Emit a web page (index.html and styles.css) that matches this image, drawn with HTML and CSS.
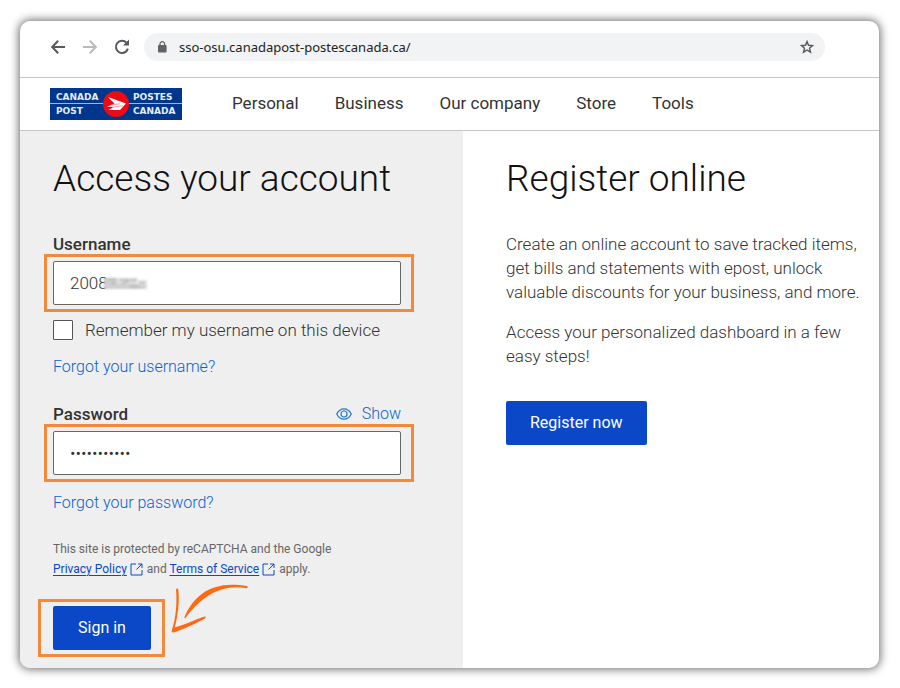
FILE: index.html
```html
<!DOCTYPE html>
<html lang="en">
<head>
<meta charset="utf-8">
<meta name="viewport" content="width=device-width, initial-scale=1">
<title>Access your account</title>
<link rel="stylesheet" href="styles.css">
</head>
<body>
<div class="window">
  <div class="toolbar">
    <div class="tools">
      <button class="tool" type="button" aria-label="Back">
        <svg width="14" height="14" viewBox="0 0 14 14" fill="none" stroke="#56595d" stroke-width="2"><path d="M14 7H1.8M7.2 .8 1.2 7l6 6.2"/></svg>
      </button>
      <button class="tool" type="button" aria-label="Forward">
        <svg width="14" height="14" viewBox="0 0 14 14" fill="none" stroke="#b9bbbd" stroke-width="2"><path d="M0 7h12.2M6.8 .8l6 6.2-6 6.2"/></svg>
      </button>
      <button class="tool" type="button" aria-label="Reload">
        <svg width="16" height="16" viewBox="0 0 16 16" fill="none" stroke="#56595d" stroke-width="2"><path d="M13.9 9.6A6.1 6.1 0 1 1 12.6 3.8"/><path d="M15 .6v6H9z" fill="#56595d" stroke="none"/></svg>
      </button>
    </div>
    <div class="address">
      <svg width="10" height="12" viewBox="0 0 10 12"><rect x="1" y="4" width="8.6" height="7.6" rx="1" fill="#5f6368"/><path d="M3 4.5V3a2.3 2.3 0 0 1 4.6 0v1.5" fill="none" stroke="#5f6368" stroke-width="1.3"/></svg>
      <input class="url" type="text" aria-label="Address" value="sso-osu.canadapost-postescanada.ca/">
      <button class="star" type="button" aria-label="Bookmark">
        <svg width="14" height="14" viewBox="0 0 14 14" fill="none" stroke="#56595d" stroke-width="1.4"><path d="M7 1.5l1.5 3.8 4.1.3-3.1 2.6 1 4L7 10l-3.5 2.2 1-4L1.4 5.6l4.1-.3z"/></svg>
      </button>
    </div>
  </div>

  <header class="site-header">
    <a class="logo" href="#" aria-label="Canada Post">
      <svg width="132" height="32" viewBox="0 0 132 32">
        <rect width="132" height="32" fill="#00368c"/>
        <path d="M0 15.5h132" stroke="#9db8dc"/>
        <g fill="#e4edf8" class="logo-text">
          <text x="6" y="12">CANADA</text><text x="6" y="26">POST</text>
          <text x="83" y="12">POSTES</text><text x="83" y="26">CANADA</text>
        </g>
        <circle cx="66" cy="16" r="13" fill="#ee0a12"/>
        <path d="M58 9 76 15.500 70 22H58.400L63 19.500 61.500 18.800H57L64.500 15.600z" fill="#fff"/>
        <path d="M60 19.600 73 17.800M62 16.800 70 15.800" stroke="#ee0a12" stroke-width=".8" opacity=".5"/>
      </svg>
    </a>
    <nav class="nav">
      <a href="#">Personal</a>
      <a href="#">Business</a>
      <a href="#">Our company</a>
      <a href="#">Store</a>
      <a href="#">Tools</a>
    </nav>
  </header>

  <main class="columns">
    <section class="access">
      <h1>Access your account</h1>
      <form>
        <label class="label" for="username">Username</label>
        <div class="highlight field">
          <input id="username" type="text" value="2008">
          <svg class="smudge" width="50" height="16" viewBox="0 0 50 16">
            <g fill="#cfcfcf"><rect x="3" y="3" width="12" height="11"/><rect x="14" y="3" width="22" height="6" opacity=".7"/><rect x="14" y="9" width="24" height="5"/><rect x="37" y="5" width="9" height="9" opacity=".65"/></g>
            <path d="M7 4h8M10 8h5M19 5h8M21 9l8-4M30 5h6M29 12h15M38 8h6" stroke="#a2a2a2" fill="none"/>
          </svg>
        </div>
        <div class="remember">
          <input id="remember" type="checkbox">
          <label for="remember">Remember my username on this device</label>
        </div>
        <a class="link forgot-user" href="#">Forgot your username?</a>
        <div class="password-head">
          <label class="label" for="password">Password</label>
          <button class="show" type="button">
            <svg width="16" height="12" viewBox="0 0 16 12" fill="none" stroke="#2874d0" stroke-width="1.2"><path d="M.7 6C2.600 2.400 5 .8 8 .8S13.400 2.400 15.300 6C13.400 9.600 11 11.200 8 11.200S2.600 9.600.7 6z"/><circle cx="8" cy="6" r="3"/></svg>
            Show
          </button>
        </div>
        <div class="highlight field">
          <input id="password" type="password" value="password123">
        </div>
        <a class="link forgot-pass" href="#">Forgot your password?</a>
        <p class="legal">This site is protected by reCAPTCHA and the Google
          <a href="#">Privacy Policy</a> <svg class="ext" width="13" height="13" viewBox="0 0 13 13"><path d="M6 1H1v11h11V7M8 1h4v4M12 1 6.500 6.500"/></svg> and
          <a href="#">Terms of Service</a> <svg class="ext" width="13" height="13" viewBox="0 0 13 13"><path d="M6 1H1v11h11V7M8 1h4v4M12 1 6.500 6.500"/></svg> apply.</p>
        <div class="highlight submit">
          <button class="primary" type="submit">Sign in</button>
          <svg class="arrow" width="80" height="52" viewBox="0 0 80 52" fill="#ff6a10">
            <path d="M14.500 34C24 12 42-3 77 3c1.200.4.800 2.300-.5 2.200C52 1 33 12 15.500 35c-.6.700-1.500 0-1-1z"/>
            <path d="M6 6.500c.5-1.300 2-1.200 2.300 0 1.300 12-.3 26-3.600 38C14 42.200 24 37 34.500 33.500c1.300-.3 1.700 1 .7 1.700C26 40.500 14 46 3.500 49.500c-1.500.3-2.300-.7-1.700-2.200C6 35 7.200 20 6 6.500z"/>
          </svg>
        </div>
      </form>
    </section>

    <section class="register">
      <h1>Register online</h1>
      <p>Create an online account to save tracked items, get bills and statements with epost, unlock valuable discounts for your business, and more.</p>
      <p>Access your personalized dashboard in a few easy steps!</p>
      <button class="primary" type="button">Register now</button>
    </section>
  </main>
</div>
</body>
</html>
```
FILE: styles.css
```css
* { box-sizing: border-box; }
body {
  margin: 0;
  padding: 21px 21px 20px 20px;
  background: #fff;
  color: #333;
  font: 300 17px/24px Roboto, "Liberation Sans", sans-serif;
}
button, input { font: inherit; color: inherit; }
button { padding: 0; border: 0; background: none; cursor: pointer; }
a { color: inherit; text-decoration: none; }
svg { display: block; flex: none; }

.window {
  overflow: hidden;
  border-radius: 10px;
  background: #fff;
  box-shadow: 0 0 10px 1px rgba(0, 0, 0, .6);
}

.toolbar {
  display: flex;
  align-items: center;
  gap: 14px;
  height: 57px;
  padding: 0 54px 4px 30px;
  border-bottom: 1px solid #c6c6c6;
}
.tools { display: flex; gap: 16px; }
.tool { display: grid; place-items: center; width: 16px; height: 16px; }
.address {
  display: flex;
  flex: 1;
  align-items: center;
  gap: 12px;
  height: 28px;
  padding: 0 11px 0 13px;
  border-radius: 14px;
  background: #f1f3f4;
}
.url {
  flex: 1;
  min-width: 0;
  padding: 0;
  border: 0;
  outline: 0;
  background: none;
  color: #222;
  font: 400 13px/20px "Noto Sans", sans-serif;
}

.site-header {
  display: flex;
  align-items: center;
  gap: 50px;
  height: 53px;
  padding: 0 30px;
  border-bottom: 1px solid #c6c6c6;
}
.logo-text { font: 700 9px "DejaVu Sans", sans-serif; }
.nav { display: flex; gap: 36px; padding-bottom: 2px; font-weight: 400; }

.columns { display: grid; grid-template-columns: 443fr 416fr; }
.access { padding: 24px 33px 11px; background: #efefef; }
.register { padding: 24px 16px 11px 43px; }
h1 {
  margin: 0 0 31px;
  color: #111;
  font-weight: 300;
  font-size: 37px;
  line-height: 48px;
}

form { max-width: 348px; }
.label { display: block; color: #333; font-weight: 500; line-height: 20px; }
.highlight { position: relative; border: 3px solid #f28a3c; }
.field { margin: 0 -13px 0 -9px; padding: 4px 10px 4px 6px; }
.field input {
  display: block;
  width: 100%;
  height: 44px;
  padding: 0 16px;
  border: 1px solid #666;
  border-radius: 2px;
  background: #fff;
}
.smudge { position: absolute; left: 54px; top: 18px; filter: blur(1px); }
.remember { display: flex; align-items: center; gap: 12px; margin-top: 6px; }
.remember input {
  appearance: none;
  width: 20px;
  height: 20px;
  margin: 0;
  border: 1px solid #555;
  border-radius: 1px;
  background: #fff;
}
.link { display: block; width: fit-content; color: #0a62d0; font-size: 16px; }
.forgot-user { margin-top: 13px; }
.password-head { display: flex; justify-content: space-between; margin-top: 25px; }
.show { display: flex; align-items: center; gap: 10px; color: #0a62d0; font-size: 16px; line-height: 20px; }
.forgot-pass { margin-top: 9px; }
.legal {
  max-width: 300px;
  margin: 24px 0 20px;
  color: #666;
  font-weight: 400;
  font-size: 12px;
  line-height: 20px;
}
.legal a { color: #0b48c8; text-decoration: underline; text-underline-offset: 2px; }
.ext { display: inline-block; margin-right: 1px; vertical-align: middle; fill: none; stroke: #0b48c8; }
.submit { width: fit-content; margin-left: -15px; padding: 4px 11px 4px 12px; }
.primary {
  height: 44px;
  padding: 0 24px;
  border-radius: 2px;
  background: #0b48c8;
  color: #fff;
  font-weight: 400;
  font-size: 16px;
}
.submit .primary { display: block; padding: 0 25px; }
.arrow { position: absolute; left: 129px; top: -19px; }
.register p { margin: 0 0 16px; }
.register h1 { margin-bottom: 29px; }
.register .primary { margin-top: 17px; }
```
